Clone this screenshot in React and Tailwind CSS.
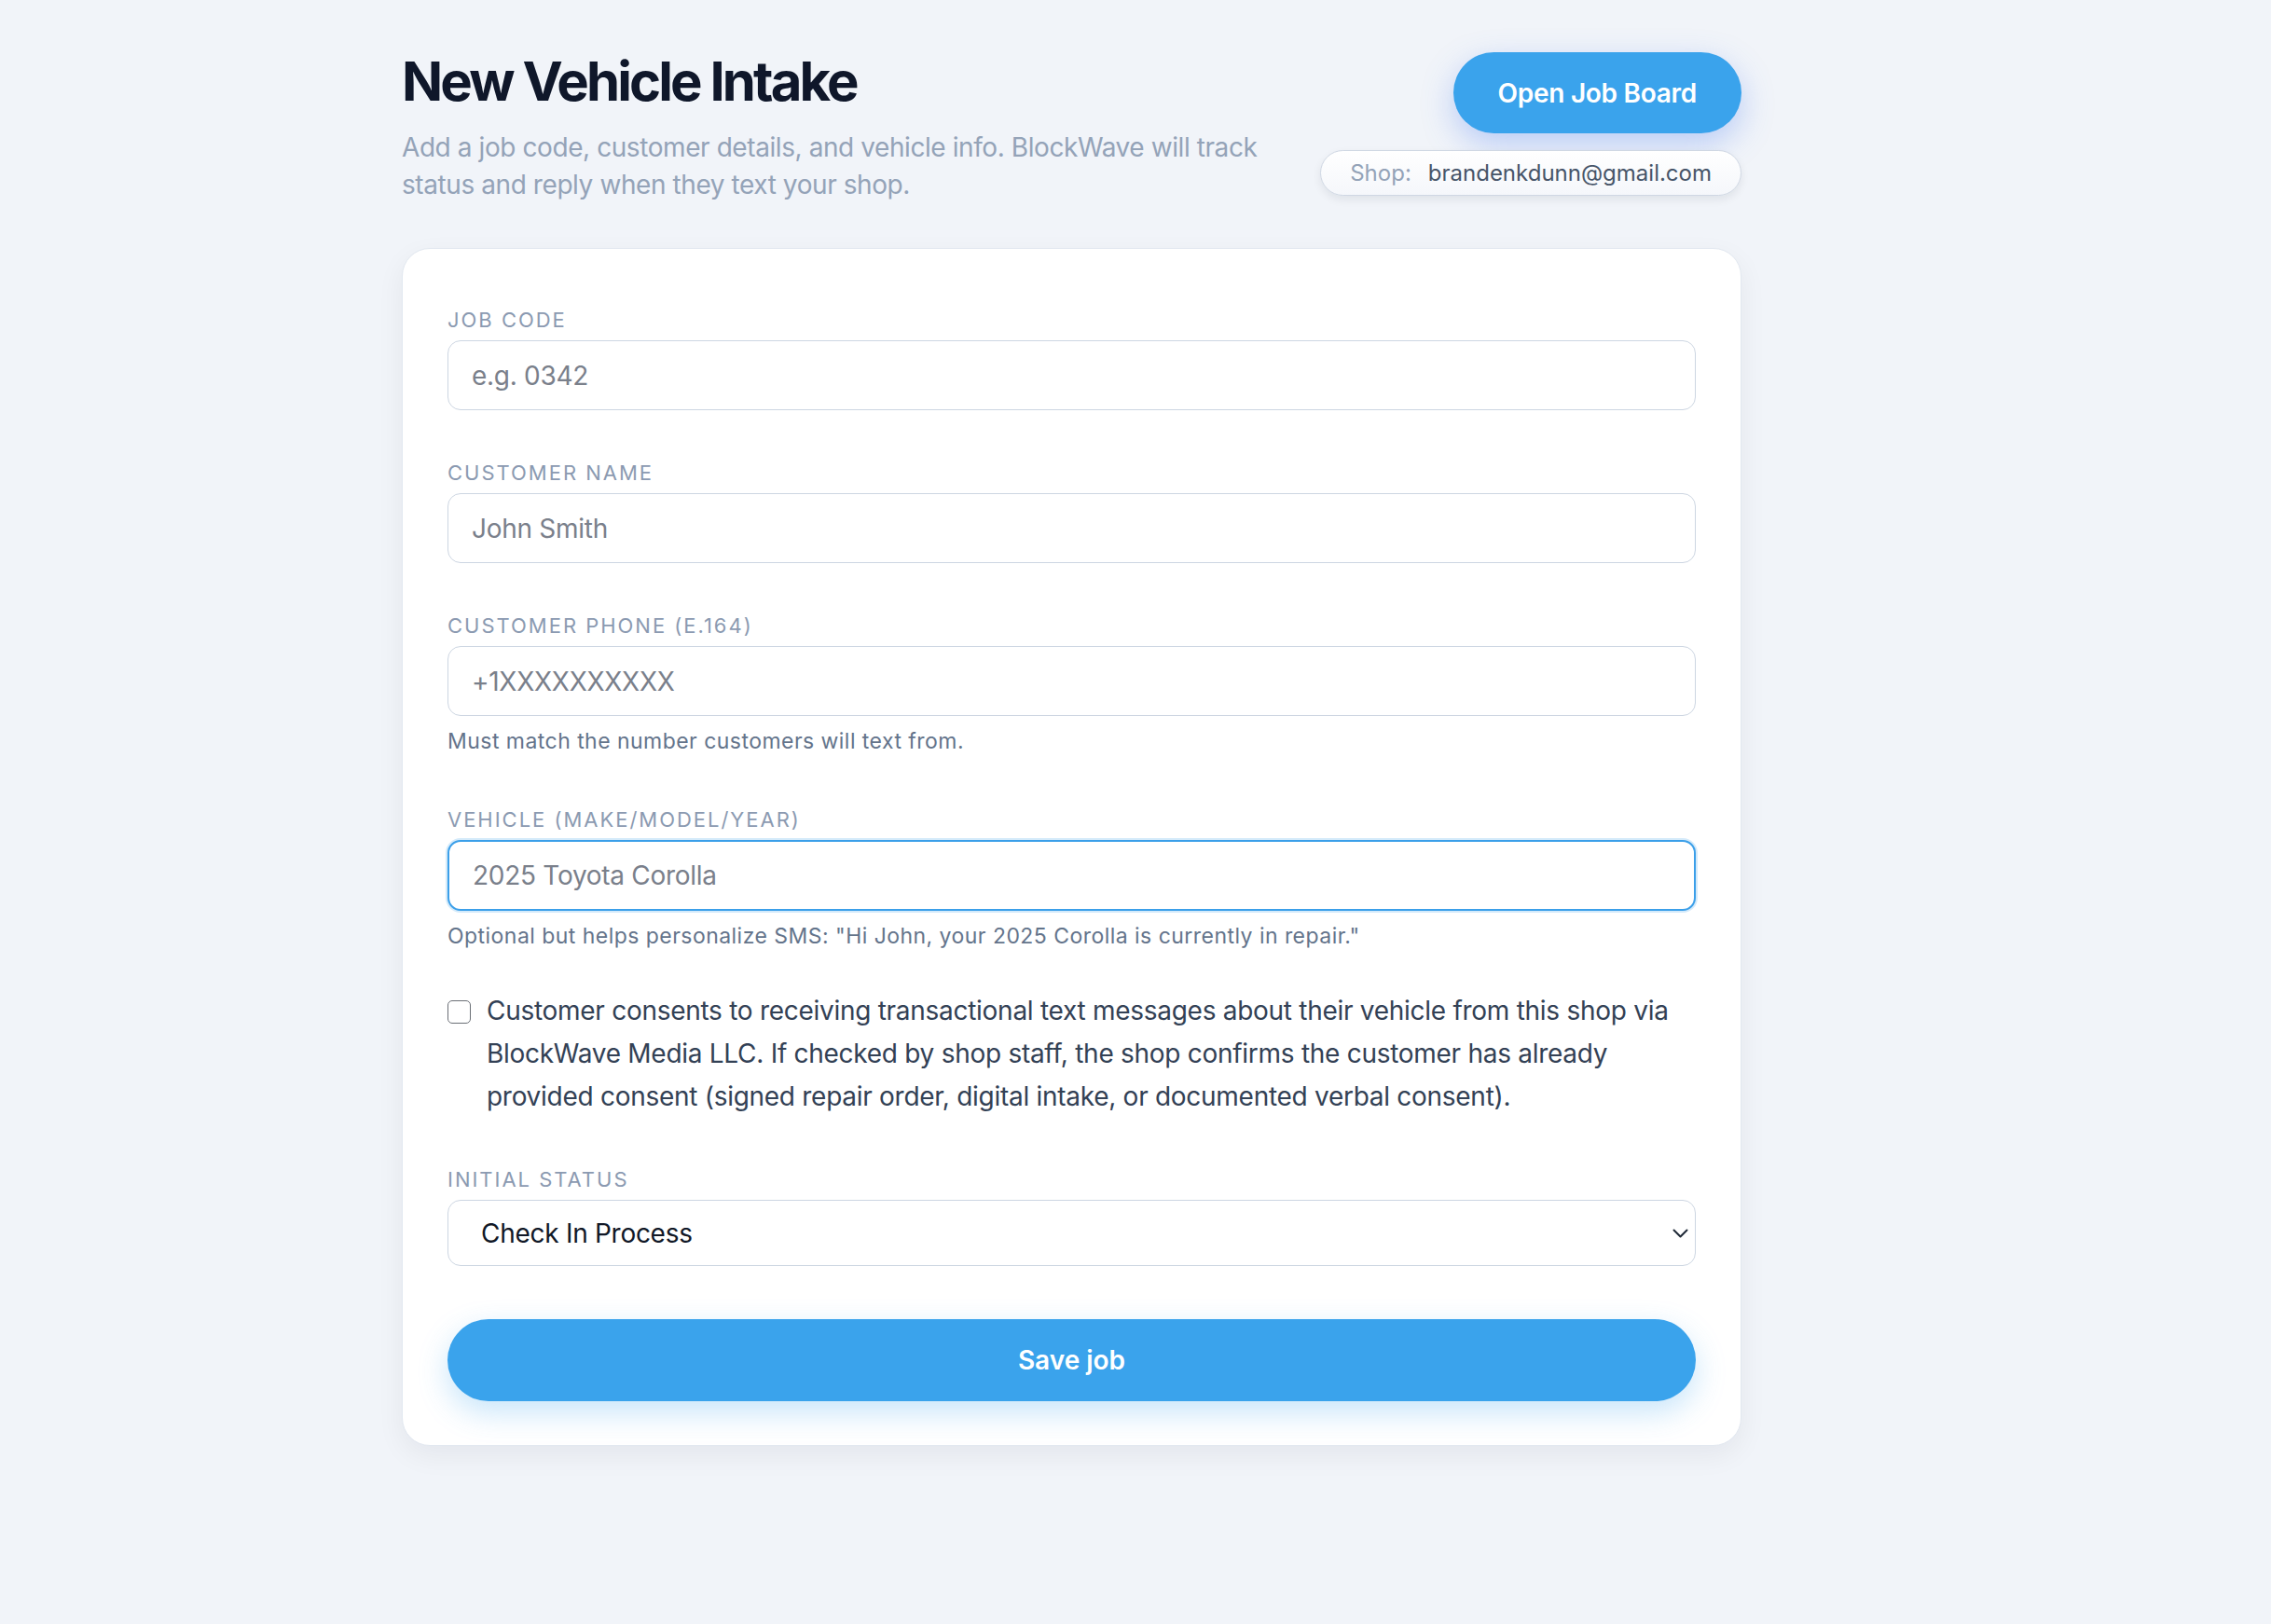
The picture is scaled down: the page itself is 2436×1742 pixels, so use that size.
import React from "react";

function Field({ label, placeholder, help, focused }) {
  return (
    <div className="flex flex-col">
      <label className="mb-[5px] text-[22px] leading-[33px] tracking-[0.09em] text-[#8b9ab1] uppercase">
        {label}
      </label>
      <input
        type="text"
        placeholder={placeholder}
        className={
          focused
            ? "h-[76px] w-full rounded-[14px] border-2 border-[#3b9fe9] bg-white px-[25px] text-[28px] tracking-[-0.01em] text-[#111827] shadow-[0_0_0_2px_rgba(59,159,233,0.22)] outline-none placeholder:text-[#7a808b]"
            : "h-[75px] w-full rounded-[14px] border-[1.5px] border-[#cdd6e2] bg-white px-[25px] text-[28px] tracking-[-0.01em] text-[#111827] outline-none placeholder:text-[#7a808b]"
        }
      />
      {help && (
        <p className="mt-[11px] text-[23px] leading-[33px] tracking-[0.02em] text-[#64748b]">{help}</p>
      )}
    </div>
  );
}

function App() {
  return (
    <div className="min-h-screen w-full bg-[#f1f4f9] font-['Inter',sans-serif]">
      <div className="ml-[431px] w-[1437px] pt-[57px] pb-[190px]">
        {/* header */}
        <div className="flex items-start justify-between">
          <div className="flex flex-col">
            <h1 className="text-[58px] leading-[60px] font-bold tracking-[-0.05em] text-[#0f172a]">
              New Vehicle Intake
            </h1>
            <p className="mt-[21px] w-[960px] text-[28px] leading-[40px] tracking-[-0.015em] text-[#94a3b8]">
              Add a job code, customer details, and vehicle info. BlockWave will track status and reply when they text your shop.
            </p>
          </div>
          <div className="-mt-[1px] flex flex-col items-end gap-[18px]">
            <button className="h-[87px] rounded-full bg-[#3aa3ec] px-[48px] text-[28px] font-semibold tracking-[-0.01em] text-white shadow-[0_12px_34px_rgba(80,130,240,0.35)]">
              Open Job Board
            </button>
            <div className="flex h-[49px] items-center gap-[18px] rounded-full border-[1.5px] border-[#cfd7e3] bg-gradient-to-b from-white to-[#f5f7fb] px-[31px] text-[24px] shadow-[0_4px_10px_rgba(15,23,42,0.08)]">
              <span className="text-[#94a3b8]">Shop:</span>
              <span className="text-[#475569]">brandenkdunn@gmail.com</span>
            </div>
          </div>
        </div>

        {/* card */}
        <div className="mt-[48px] rounded-[30px] border border-[#e2e8f0] bg-white px-[48px] pt-[60px] pb-[47px] shadow-[0_10px_30px_rgba(15,23,42,0.06)]">
          <div className="flex flex-col gap-[51px]">
            <Field label="Job code" placeholder="e.g. 0342" />
            <Field label="Customer name" placeholder="John Smith" />
            <Field
              label="Customer phone (E.164)"
              placeholder="+1XXXXXXXXXX"
              help="Must match the number customers will text from."
            />
            <Field
              label="Vehicle (make/model/year)"
              placeholder="2025 Toyota Corolla"
              help={'Optional but helps personalize SMS: "Hi John, your 2025 Corolla is currently in repair."'}
              focused
            />
          </div>

          <label className="mt-[40px] flex items-start gap-[17px]">
            <input
              type="checkbox"
              className="mt-[12px] h-[25px] w-[25px] shrink-0 appearance-none rounded-[5px] border-[1.5px] border-[#6b6f76] bg-white"
            />
            <span className="text-[28px] leading-[46px] tracking-[-0.01em] text-[#334155]">
              Customer consents to receiving transactional text messages about their vehicle from this shop via BlockWave Media LLC. If checked by shop staff, the shop confirms the customer has already provided consent (signed repair order, digital intake, or documented verbal consent).
            </span>
          </label>

          <div className="mt-[50px] flex flex-col">
            <label className="mb-[5px] text-[22px] leading-[33px] tracking-[0.09em] text-[#8b9ab1] uppercase">
              Initial status
            </label>
            <div className="relative">
              <select className="h-[71px] w-full appearance-none rounded-[14px] border-[1.5px] border-[#cdd6e2] bg-white pl-[35px] text-[28px] tracking-[-0.01em] text-[#111827] outline-none">
                <option>Check In Process</option>
                <option>In Repair</option>
                <option>Ready for Pickup</option>
              </select>
              <svg
                className="pointer-events-none absolute right-[8px] top-[31px]"
                width="17"
                height="10"
                viewBox="0 0 17 10"
                fill="none"
              >
                <polyline points="1.5,1.5 8.5,8.5 15.5,1.5" stroke="#1f2937" strokeWidth="2" strokeLinecap="round" strokeLinejoin="round" />
              </svg>
            </div>
          </div>

          <button className="mt-[57px] h-[88px] w-full rounded-full bg-[#3aa3ec] text-[28px] font-semibold text-white shadow-[0_12px_32px_rgba(58,163,236,0.28)]">
            Save job
          </button>
        </div>
      </div>
    </div>
  );
}

export default App;
